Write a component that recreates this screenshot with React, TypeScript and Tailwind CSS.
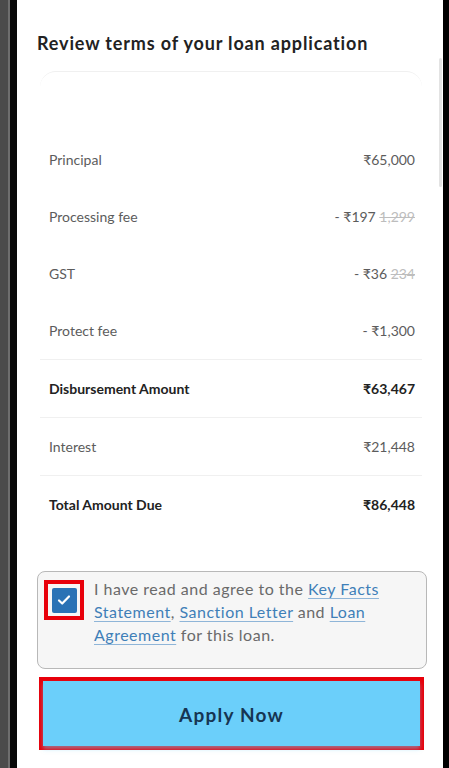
import React from "react";

const font = { fontFamily: '"Lato", "Noto Sans", "DejaVu Sans", sans-serif' };

type Row = { label: string; value: React.ReactNode; bold?: boolean; divider?: boolean };

const rows: Row[] = [
  { label: "Principal", value: <span>₹65,000</span> },
  {
    label: "Processing fee",
    value: (
      <span>
        - ₹197 <span className="text-[#bdbdbd] line-through">1,299</span>
      </span>
    ),
  },
  {
    label: "GST",
    value: (
      <span>
        - ₹36 <span className="text-[#bdbdbd] line-through">234</span>
      </span>
    ),
  },
  { label: "Protect fee", value: <span>- ₹1,300</span> },
  { label: "Disbursement Amount", value: <span>₹63,467</span>, bold: true, divider: true },
  { label: "Interest", value: <span>₹21,448</span>, divider: true },
  { label: "Total Amount Due", value: <span>₹86,448</span>, bold: true, divider: true },
];

export default function App() {
  return (
    <div className="flex h-[768px] w-[449px] overflow-hidden bg-black" style={font}>
      <div className="flex h-full shrink-0">
        <div className="h-full w-[8px] bg-[#4b4b4b]" />
        <div className="h-full w-[2px] bg-[#6e6e6e]" />
        <div className="h-full w-[7px] bg-[#080808]" />
      </div>
      <div className="relative flex h-full flex-1 flex-col bg-white">
        <div className="absolute right-[1px] top-[58px] h-[129px] w-[3px] rounded-full bg-[#e3e3e3]" />
        <h1 className="ml-[20px] mt-[31px] text-[18px] font-bold leading-[24px] tracking-[0.85px] text-[#222]">
          Review terms of your loan application
        </h1>
        <div className="ml-[23px] mr-[21px] mt-[16px] rounded-t-[16px] border-t-[1.5px] border-[#f0f0f0] pt-[59px]">
          {rows.map((r) => (
            <div
              key={r.label}
              className={`flex items-center justify-between pl-[9px] pr-[7px] text-[14px] ${
                r.divider ? "h-[58px] border-t border-[#f0f0f0]" : "h-[57px]"
              } ${r.bold ? "font-bold text-[#222]" : "text-[#5c5c5c]"}`}
            >
              <span>{r.label}</span>
              {r.value}
            </div>
          ))}
        </div>
        <div className="ml-[20px] mr-[16px] mt-[38px] flex h-[98px] gap-[10px] rounded-[8px] border-[1.5px] border-[#b8b8b8] bg-[#f6f6f6] pl-[6px] pr-[4px] pt-[8px]">
          <div className="flex h-[40px] w-[40px] shrink-0 items-center justify-center border-4 border-[#e8000b]">
            <div className="flex h-[25px] w-[25px] items-center justify-center rounded-[2px] bg-[#2a72b5]">
              <svg width="16" height="16" viewBox="0 0 16 16" fill="none">
                <path d="M3 8.5l3.2 3L13 4.5" stroke="white" strokeWidth="2.2" strokeLinecap="round" strokeLinejoin="round" />
              </svg>
            </div>
          </div>
          <p className="mt-[-3px] text-[16px] leading-[23px] tracking-[0.5px] text-[#6a6a6a]">
            I have read and agree to the{" "}
            <span className="text-[#3f7fb8] underline decoration-[#8fb5d8] underline-offset-[3px]">Key Facts Statement</span>,{" "}
            <span className="text-[#3f7fb8] underline decoration-[#8fb5d8] underline-offset-[3px]">Sanction Letter</span> and{" "}
            <span className="text-[#3f7fb8] underline decoration-[#8fb5d8] underline-offset-[3px]">Loan Agreement</span> for this loan.
          </p>
        </div>
        <div className="ml-[22px] mr-[19px] mt-[8px] h-[73px] border-4 border-[#e8000b]">
          <button className="flex h-full w-full items-center justify-center bg-[#6bcffa] pt-[4px] text-[19px] font-bold tracking-[1.2px] text-[#163552] shadow-[0_3px_4px_rgba(107,207,250,0.5)]">
            Apply Now
          </button>
        </div>
      </div>
      <div className="h-full w-[6px] shrink-0 bg-black" />
    </div>
  );
}
